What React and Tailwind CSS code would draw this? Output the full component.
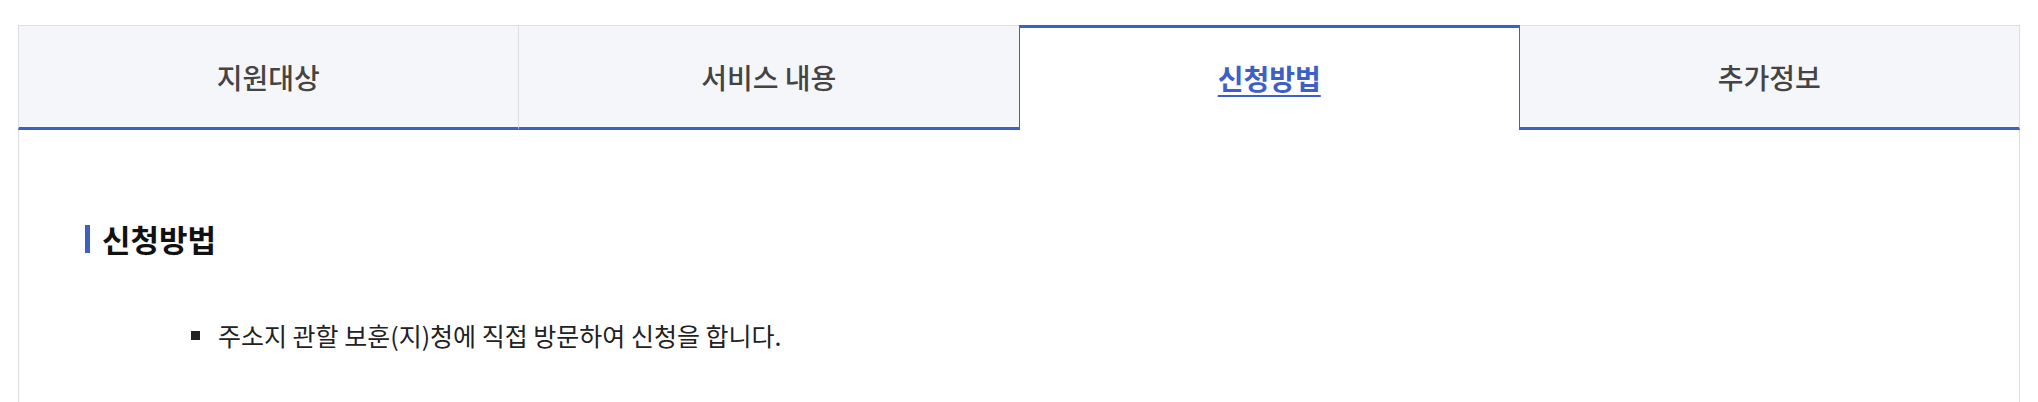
import React, { useState } from 'react';

const tabs = ['지원대상', '서비스 내용', '신청방법', '추가정보'];

const App = () => {
  const [active, setActive] = useState(2);

  return (
    <div
      className="min-h-screen bg-white px-[18px] pt-[25px]"
      style={{ fontFamily: '"Noto Sans CJK KR", "Noto Sans", sans-serif' }}
    >
      <ul className="flex">
        {tabs.map((tab, i) => {
          const isActive = i === active;
          return (
            <li key={tab} className="flex-1">
              <button
                onClick={() => setActive(i)}
                className={
                  isActive
                    ? 'w-full h-[105px] flex items-center justify-center bg-white border-t-[3px] border-x border-[#3d5fc8] pb-[2px]'
                    : `w-full h-[105px] flex items-center justify-center bg-[#f5f6fa] border-t border-[#dcdee3] border-b-[3px] border-b-[#3d5fc8] ${
                        i === 0 ? 'border-l' : ''
                      } ${i === tabs.length - 1 || i + 1 !== active ? 'border-r' : ''}`
                }
              >
                <span
                  className={
                    isActive
                      ? 'text-[28px] font-bold text-[#3d5fc8] underline underline-offset-[5px] decoration-[2px]'
                      : 'text-[28px] font-medium text-[#444]'
                  }
                >
                  {tab}
                </span>
              </button>
            </li>
          );
        })}
      </ul>

      <div className="border-x border-[#dcdee3] pl-[66px] pt-[90px] pb-[80px]">
        <h3 className="flex items-center gap-[12px] h-[38px]">
          <span className="w-[5px] h-[28px] bg-[#3d5fc8]"></span>
          <span className="text-[31px] font-bold text-[#111] leading-[38px]">신청방법</span>
        </h3>

        <ul className="mt-[60px] ml-[106px]">
          <li className="flex items-center gap-[18px] h-[34px]">
            <span className="w-[9px] h-[9px] bg-[#222]"></span>
            <span className="text-[25px] text-[#222] leading-[34px]">
              주소지 관할 보훈(지)청에 직접 방문하여 신청을 합니다.
            </span>
          </li>
        </ul>
      </div>
    </div>
  );
};

export default App;
